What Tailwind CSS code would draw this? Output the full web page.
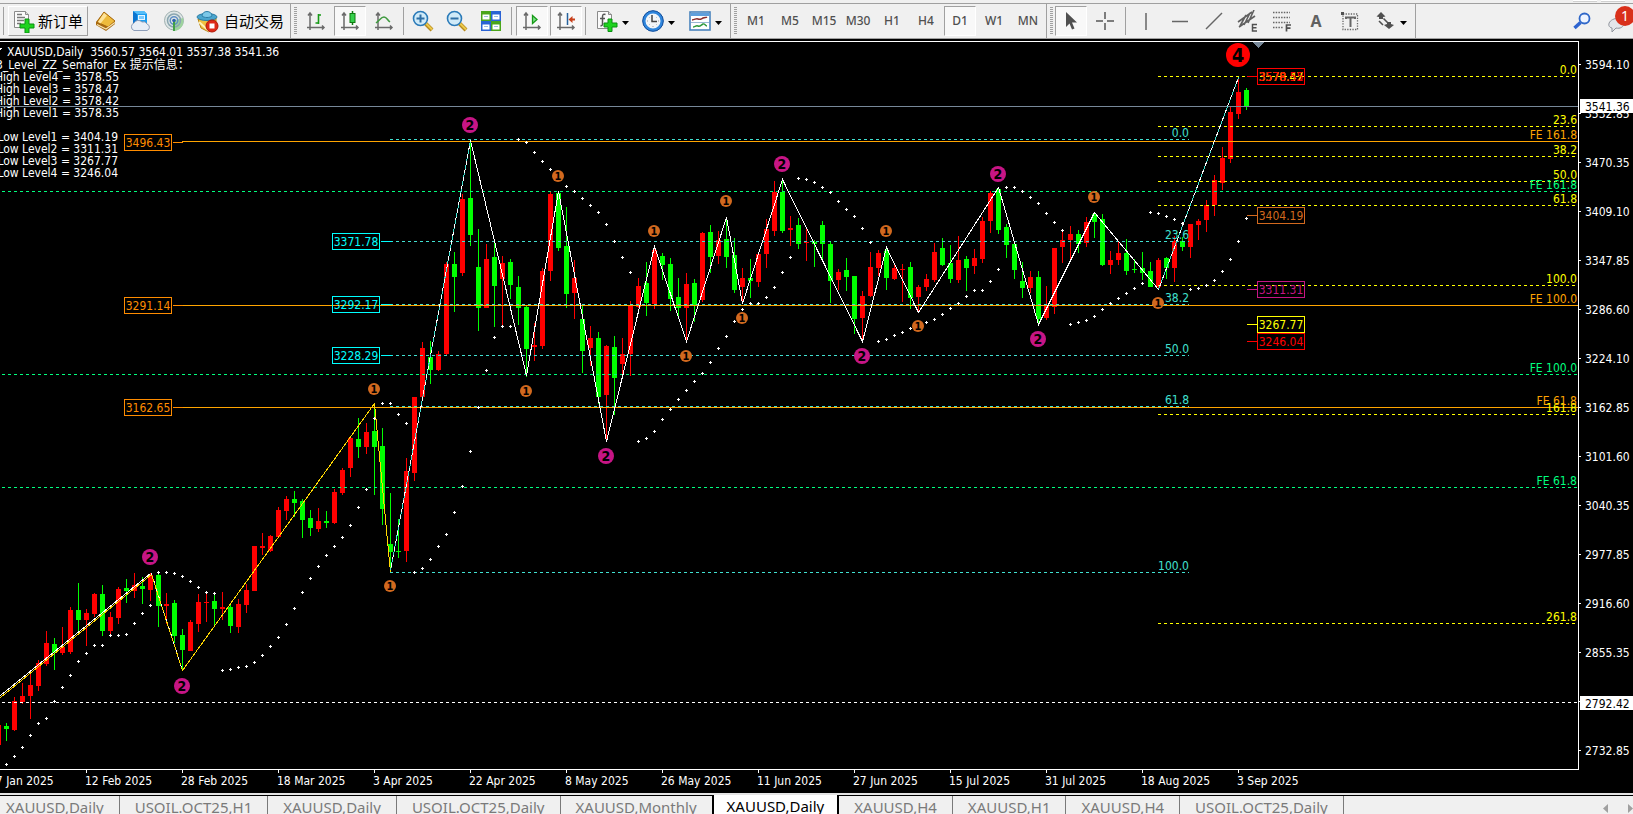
<!DOCTYPE html>
<html lang="zh-CN">
<head>
    <meta charset="UTF-8">
    <meta name="viewport" content="width=device-width, initial-scale=1.0">
    <title>XAUUSD,Daily</title>
    <script src="https://cdn.jsdelivr.net/npm/@tailwindcss/browser@4"></script>
</head>
<body class="h-screen flex flex-col overflow-hidden bg-black text-black font-['Noto_Sans','Noto_Sans_CJK_SC',sans-serif]">

    <!-- toolbar -->
    <header class="relative bg-[#f0f0f0] pt-[3px] border-b border-[#a0a0a0] flex-shrink-0">
        <div class="absolute right-2 top-0 flex gap-1"><span class="w-6 h-0.5 bg-white border-b border-[#d0d0d0]"></span><span class="w-6 h-0.5 bg-white border-b border-[#d0d0d0]"></span></div>
        <div class="flex items-center h-[35px] border-t border-[#a0a0a0]">
            <!-- standard -->
            <div class="flex items-center gap-0.5 h-full border-r border-[#a0a0a0] pr-0.5">
                <span class="w-px h-7 bg-[#a0a0a0] ml-[3px] mr-0.5"></span>
                <button class="w-20 h-[30px] flex items-center gap-[3px] pl-1 text-[15px] border border-t-white border-l-white border-r-[#a0a0a0] border-b-[#a0a0a0]">
                    <svg width="22" height="24" viewBox="0 0 22 24"><path d="M1.500 2.500h11l3 3v13h-14z" fill="#fafafa" stroke="#8a8a8a"/><path d="M12.500 2.500v3h3" fill="#ddd" stroke="#8a8a8a"/><path d="M4 5.500h5M4 8.500h8M4 11.500h7M4 14.500h4" stroke="#777" stroke-width="1.300"/><path d="M12 10h4v5h5v4h-5v5h-4v-5H7v-4h5z" fill="#1ed31e" stroke="#0a8f12"/></svg>
                    新订单
                </button>
                <button class="w-8 h-[30px] grid place-items-center" title="市场报价"><svg width="22" height="22" viewBox="0 0 22 22"><path d="M9 2L20 11v3l-9 7-10-6v-3z" fill="#a8690f"/><path d="M9 2l11 9-7 6L2 12z" fill="#eebb3c" stroke="#a8690f"/><path d="M9 3l3 2.500-6.500 8L3 12z" fill="#fde39a"/><path d="M2 14.500l9 4.500 9-6.500" stroke="#f6e3b0" stroke-width="1.200" fill="none"/></svg></button>
                <button class="w-8 h-[30px] grid place-items-center" title="虚拟主机"><svg width="22" height="22" viewBox="0 0 22 22"><path d="M4 1h11l3 3v9H4z" fill="#1b9df0"/><path d="M4 1l4 3v9H4z" fill="#0b74cf"/><path d="M4 1h11l3 3H8z" fill="#55bdf8"/><rect x="9.500" y="5.500" width="6" height="4" fill="#7ccbff" stroke="#e6f6ff"/><path d="M5 20.500a4 4 0 0 1 0-7.500 5 5 0 0 1 8-1 4 4 0 0 1 5 2 3.400 3.400 0 0 1 0 6.500z" fill="#e9eef6" stroke="#8d9db8"/></svg></button>
                <button class="w-8 h-[30px] grid place-items-center" title="信号"><svg width="22" height="22" viewBox="0 0 22 22" fill="none"><circle cx="11" cy="10.500" r="9.500" fill="#dfe6e6" stroke="#9fb0b0"/><path d="M11 10.500v10.500a10 10 0 0 0 9-13z" fill="#9ed39e"/><circle cx="11" cy="10.500" r="6.500" stroke="#8aa6b0" stroke-width="1.500"/><circle cx="11" cy="10.500" r="3.800" stroke="#5f8fc4" stroke-width="1.500"/><circle cx="11" cy="10.500" r="1.800" fill="#2f62ad"/><path d="M11 12v9" stroke="#43a047" stroke-width="2"/></svg></button>
                <button class="w-24 h-[30px] flex items-center gap-[5px] pl-1 text-[15px]">
                    <svg width="23" height="23" viewBox="0 0 23 23" class="flex-shrink-0"><path d="M2 9l3 9 8 4 7-9V8z" fill="#f0c040" stroke="#b98514"/><path d="M3 12l10 9" stroke="#fff2b8" stroke-width="2"/><ellipse cx="11" cy="7" rx="10" ry="3.500" fill="#4aa6cf" stroke="#2d7ea6"/><path d="M6 6c0-6 10-6 10 0-2 2-8 2-10 0z" fill="#7cc8e8" stroke="#2d7ea6"/><circle cx="16" cy="16" r="6" fill="#df2a17" stroke="#b01808"/><rect x="13.500" y="13.500" width="5" height="5" fill="#fff"/></svg>
                    自动交易
                </button>
            </div>
            <!-- charts -->
            <span class="w-[3px] h-7 ml-[3px] mr-[3px] bg-[repeating-linear-gradient(to_bottom,#a0a0a0_0_1px,#f0f0f0_1px_2px)]"></span>
            <div class="flex items-center gap-0.5 h-full border-r border-[#a0a0a0] pr-0.5 text-[#5a5a5a]">
                <button class="w-8 h-[30px] grid place-items-center" title="柱状图"><svg width="20" height="20" viewBox="0 0 20 20" fill="none"><path d="M4 2v17M1 16.500h17M2 4.500L4 2l2 2.500M16 14.500l2 2-2 2" stroke="#6a6a6a" stroke-width="1.500"/><path d="M12.500 3v10M9.500 12h3M12.500 4h2.500" stroke="#179a17" stroke-width="1.600"/></svg></button>
                <button class="w-8 h-[30px] grid place-items-center bg-[#f8f8f8] border border-t-[#a0a0a0] border-l-[#a0a0a0] border-r-white border-b-white" title="阴阳烛"><svg width="20" height="20" viewBox="0 0 20 20" fill="none"><path d="M4 2v17M1 16.500h17M2 4.500L4 2l2 2.500M16 14.500l2 2-2 2" stroke="#6a6a6a" stroke-width="1.500"/><path d="M12.500 0v14" stroke="#107a10" stroke-width="1.500"/><rect x="10" y="2.500" width="5" height="9" fill="#35d04c" stroke="#107a10"/></svg></button>
                <button class="w-8 h-[30px] grid place-items-center" title="折线图"><svg width="20" height="20" viewBox="0 0 20 20" fill="none"><path d="M4 2v17M1 16.500h17M2 4.500L4 2l2 2.500M16 14.500l2 2-2 2" stroke="#6a6a6a" stroke-width="1.500"/><path d="M2 12c4-3 5-6 8-6 3 0 3 3 6 5" stroke="#3f9a3f" stroke-width="1.500"/></svg></button>
                <span class="w-px h-7 bg-[#a0a0a0] mx-px"></span>
                <button class="w-8 h-[30px] grid place-items-center" title="放大"><svg width="22" height="22" viewBox="0 0 22 22" fill="none"><path d="M13 13l7 7" stroke="#b78a1c" stroke-width="4"/><path d="M13 12.500l7 7" stroke="#ecc94b" stroke-width="2"/><circle cx="8.500" cy="8.500" r="7" fill="#cfeaf8" stroke="#2a7ab8" stroke-width="1.600"/><path d="M4.500 8.500h8M8.500 4.500v8" stroke="#2e6fa5" stroke-width="2"/></svg></button>
                <button class="w-8 h-[30px] grid place-items-center" title="缩小"><svg width="22" height="22" viewBox="0 0 22 22" fill="none"><path d="M13 13l7 7" stroke="#b78a1c" stroke-width="4"/><path d="M13 12.500l7 7" stroke="#ecc94b" stroke-width="2"/><circle cx="8.500" cy="8.500" r="7" fill="#cfeaf8" stroke="#2a7ab8" stroke-width="1.600"/><path d="M4.500 8.500h8" stroke="#2e6fa5" stroke-width="2"/></svg></button>
                <button class="w-8 h-[30px] grid place-items-center" title="平铺"><svg width="20" height="20" viewBox="0 0 20 20"><path fill="#4aa51a" d="M0 0h10v10H0zM10 10h10v10H10z"/><path fill="#2a62d4" d="M10 0h10v10H10zM0 10h10v10H0z"/><path fill="#fff" d="M1.500 3.500h7v5h-7zM11.500 3.500h7v5h-7zM1.500 13.500h7v5h-7zM11.500 13.500h7v5h-7z"/><path d="M3 5.500h4M13 5.500h4M3 15.500h4M13 15.500h4" stroke="#9fbbe0"/></svg></button>
                <span class="w-px h-7 bg-[#a0a0a0] mx-0.5"></span>
                <button class="w-8 h-[30px] grid place-items-center bg-[#f8f8f8] border border-t-[#a0a0a0] border-l-[#a0a0a0] border-r-white border-b-white" title="自动滚动"><svg width="20" height="20" viewBox="0 0 20 20" fill="none"><path d="M4 2v17M1 16.500h17M2 4.500L4 2l2 2.500M16 14.500l2 2-2 2" stroke="#6a6a6a" stroke-width="1.500"/><path d="M10.500 4.500L15 8.500l-4.500 4z" fill="#7de08a" stroke="#179a17" stroke-width="1.300"/></svg></button>
                <button class="w-8 h-[30px] grid place-items-center bg-[#f8f8f8] border border-t-[#a0a0a0] border-l-[#a0a0a0] border-r-white border-b-white" title="图表平移"><svg width="20" height="20" viewBox="0 0 20 20" fill="none"><path d="M4 2v17M1 16.500h17M2 4.500L4 2l2 2.500M16 14.500l2 2-2 2" stroke="#6a6a6a" stroke-width="1.500"/><path d="M11.500 2v12" stroke="#27639c" stroke-width="1.500"/><path d="M12.500 8.500l4-3.500v2.500H19v2h-2.500V12z" fill="#c8401c"/></svg></button>
                <span class="w-px h-7 bg-[#a0a0a0] mx-px"></span>
                <button class="w-[45px] h-[30px] flex items-center gap-1 pl-[7px]" title="指标"><svg width="22" height="22" viewBox="0 0 22 22"><path d="M1.500 1.500h11l3 3v14h-14z" fill="#fafafa" stroke="#8a8a8a"/><path d="M12.500 1.500v3h3" fill="#ddd" stroke="#8a8a8a"/><path d="M9.500 4.500C7 3.500 6.500 5 6.500 7v7c0 1.500-1 2-2 1.500M4 8.500h5" stroke="#555" stroke-width="1.500" fill="none"/><path d="M12 9h4v4h5v4h-5v4.500h-4V17H8v-4h4z" fill="#1ed31e" stroke="#0a8f12"/></svg><svg width="7" height="4" class="mt-1"><path d="M0 0h7L3.500 4z"/></svg></button>
                <button class="w-[45px] h-[30px] flex items-center gap-1 pl-[6px]" title="时段"><svg width="22" height="22" viewBox="0 0 22 22"><circle cx="11" cy="11" r="9" fill="#f2f5f8" stroke="#2f86dd" stroke-width="3"/><circle cx="11" cy="11" r="10.300" fill="none" stroke="#164f9b"/><path d="M10 5v6.500h5" stroke="#444" stroke-width="1.500" fill="none"/><path d="M5 11h1M16 11h1M11 16v1M7 7l.5.5M15 7l-.5.5M7 15l.5-.5M15 15l-.5-.5" stroke="#999"/></svg><svg width="7" height="4" class="mt-1"><path d="M0 0h7L3.500 4z"/></svg></button>
                <button class="w-[45px] h-[30px] flex items-center gap-1 pl-[6px]" title="模板"><svg width="22" height="20" viewBox="0 0 22 20"><rect x="1" y="1" width="20" height="18" fill="#fff" stroke="#4a84bd" stroke-width="1.600"/><path fill="#5f9fdc" d="M2 2h18v3H2z"/><path d="M2 11.500h18" stroke="#9bb8d3"/><path d="M3 9c3 0 4-2 6-1s3 0 5-1 3 0 4-1" stroke="#8a2d2d" stroke-width="1.400" fill="none"/><path d="M4 16c2 0 3-2 5-1s3-1 5-2 2 2 4 2" stroke="#2f9a3d" stroke-width="1.400" fill="none"/></svg><svg width="7" height="4" class="mt-1"><path d="M0 0h7L3.500 4z"/></svg></button>
            </div>
            <!-- periods -->
            <span class="w-[3px] h-7 ml-[3px] mr-[3px] bg-[repeating-linear-gradient(to_bottom,#a0a0a0_0_1px,#f0f0f0_1px_2px)]"></span>
            <div class="flex items-center gap-0.5 h-full border-r border-[#a0a0a0] pr-0.5 text-xs font-medium text-[#505050]">
                <button class="w-8 h-[30px]">M1</button>
                <button class="w-8 h-[30px]">M5</button>
                <button class="w-8 h-[30px]">M15</button>
                <button class="w-8 h-[30px]">M30</button>
                <button class="w-8 h-[30px]">H1</button>
                <button class="w-8 h-[30px]">H4</button>
                <button class="w-8 h-[30px] bg-[#f8f8f8] border border-t-[#a0a0a0] border-l-[#a0a0a0] border-r-white border-b-white">D1</button>
                <button class="w-8 h-[30px]">W1</button>
                <button class="w-8 h-[30px]">MN</button>
            </div>
            <!-- line studies -->
            <span class="w-[3px] h-7 ml-[3px] mr-0.5 bg-[repeating-linear-gradient(to_bottom,#a0a0a0_0_1px,#f0f0f0_1px_2px)]"></span>
            <div class="flex items-center gap-0.5 h-full border-r border-[#a0a0a0] pr-0.5">
                <button class="w-8 h-[30px] grid place-items-center bg-[#f8f8f8] border border-t-[#a0a0a0] border-l-[#a0a0a0] border-r-white border-b-white" title="光标"><svg width="20" height="20" viewBox="0 0 20 20"><path d="M5 1v15l3.500-3.500L11 18.500l2.500-1-2.500-6h5z" fill="#505050"/></svg></button>
                <button class="w-8 h-[30px] grid place-items-center" title="十字准线"><svg width="20" height="20" viewBox="0 0 20 20"><path d="M10 1v7M10 12v7M1 10h7M12 10h7" stroke="#555" stroke-width="1.500"/></svg></button>
                <span class="w-px h-7 bg-[#a0a0a0] mx-0.5"></span>
                <button class="w-8 h-[30px] grid place-items-center" title="垂直线"><svg width="20" height="20" viewBox="0 0 20 20"><path d="M10 2v17" stroke="#666" stroke-width="1.500"/></svg></button>
                <button class="w-8 h-[30px] grid place-items-center" title="水平线"><svg width="20" height="20" viewBox="0 0 20 20"><path d="M2 10.500h16" stroke="#666" stroke-width="1.500"/></svg></button>
                <button class="w-8 h-[30px] grid place-items-center" title="趋势线"><svg width="20" height="20" viewBox="0 0 20 20"><path d="M2 18L18 2" stroke="#666" stroke-width="1.500"/></svg></button>
                <button class="w-8 h-[30px] grid place-items-center" title="通道"><svg width="22" height="22" viewBox="0 0 22 22"><path d="M1 12L15 2M2 17L18 6M3 16l6-11M7 15l6-12M11 13l6-13" stroke="#606060" stroke-width="1.600"/><path d="M20 14.500h-4.500v6.500H20M15.500 17.700h4" stroke="#505050" stroke-width="1.500" fill="none"/></svg></button>
                <button class="w-8 h-[30px] grid place-items-center" title="斐波那契"><svg width="20" height="21" viewBox="0 0 20 21"><path d="M1 1.500h17M1 6.500h17M1 11.500h17M1 16.500h10" stroke="#666" stroke-width="1.500" stroke-dasharray="1.500 1.200"/><path d="M14.500 20.500V14H19M14.500 17.200h4" stroke="#505050" stroke-width="1.700" fill="none"/></svg></button>
                <button class="w-8 h-[30px] text-base font-bold text-[#606060]" title="文本">A</button>
                <button class="w-8 h-[30px] grid place-items-center" title="文本标签"><svg width="18" height="19" viewBox="0 0 18 19"><rect x="2" y="2" width="14.500" height="15.500" fill="none" stroke="#666" stroke-width="1.300" stroke-dasharray="1.300 1.300"/><path d="M0 0h3v3H0z" fill="#505050"/><path d="M5 7V5.500h9V7M9.500 5.500V15" stroke="#666" stroke-width="2" fill="none"/></svg></button>
                <button class="w-[45px] h-[30px] flex items-center gap-1.5 pl-2" title="箭头"><svg width="18" height="18" viewBox="0 0 18 18"><path d="M5 0l4.500 4.500L7 5v2H3V5L.5 4.500zM13 17l-5-4 3-1v-2h4v2l3 1z" fill="#505050"/><path d="M3 9l4 4M7.500 6.500l4 4" stroke="#505050" stroke-width="1.600"/></svg><svg width="7" height="4" class="mt-1"><path d="M0 0h7L3.500 4z"/></svg></button>
            </div>
            <div class="ml-auto flex items-center">
                <button class="w-8 h-[30px] grid place-items-center" title="搜索"><svg width="18" height="18" viewBox="0 0 18 18" fill="none"><path d="M7.500 10.500L1.500 16" stroke="#2d63cf" stroke-width="3.500"/><circle cx="11.500" cy="6.500" r="5" fill="#eef4ff" stroke="#2f67c9" stroke-width="1.800"/></svg></button>
                <button class="relative w-[35px] h-[30px] pl-2 pt-2" title="消息">
                    <svg width="22" height="18" viewBox="0 0 22 18"><path d="M8 3c4-2 10 0 10 4s-4 6-8 5l-4 4v-4C1 11 2 5 8 3z" fill="#e4e6ea" stroke="#8f949c"/></svg>
                    <span class="absolute -right-0.5 top-0 w-5 h-5 rounded-full bg-[#d9301a] text-white text-sm leading-5 text-center">1</span>
                </button>
            </div>
        </div>
    </header>

    <!-- chart window -->
    <main class="flex-1 min-h-0 flex flex-col pt-0.5 text-xs font-['DejaVu_Sans_Condensed','Noto_Sans','Noto_Sans_CJK_SC',sans-serif]">
        <div class="flex-1 min-h-0 flex">
            <svg id="plot" class="flex-1 min-w-0 h-full border-t border-white"></svg>
            <svg id="price-scale" class="w-[55px] h-full border-l border-white flex-shrink-0"></svg>
        </div>
        <div class="h-6 flex-shrink-0 flex">
            <svg id="time-scale" class="flex-1 min-w-0 h-6"></svg>
            <span class="w-[54px]"></span>
        </div>
    </main>

    <!-- chart tabs -->
    <nav class="h-[21px] flex-shrink-0 overflow-hidden bg-[#f0f0f0] border-t-2 border-[#e4e4e4] flex text-[15px] leading-[22px] text-[#7a7a7a]">
        <div class="flex border-t border-black">
            <a href="#" class="pl-1.5 pr-[15px]">XAUUSD,Daily</a>
            <a href="#" class="px-[15px] border-l border-[#7a7a7a]">USOIL.OCT25,H1</a>
            <a href="#" class="px-[15px] border-l border-[#7a7a7a]">XAUUSD,Daily</a>
            <a href="#" class="px-[15px] border-l border-[#7a7a7a]">USOIL.OCT25,Daily</a>
            <a href="#" class="px-[15px] border-l border-[#7a7a7a]">XAUUSD,Monthly</a>
        </div>
        <a href="#" class="px-[13px] bg-white text-black border-x-2 border-black">XAUUSD,Daily</a>
        <div class="flex flex-1 border-t border-black">
            <a href="#" class="px-[15px]">XAUUSD,H4</a>
            <a href="#" class="px-[15px] border-l border-[#7a7a7a]">XAUUSD,H1</a>
            <a href="#" class="px-[15px] border-l border-[#7a7a7a]">XAUUSD,H4</a>
            <a href="#" class="px-[15px] border-x border-[#7a7a7a]">USOIL.OCT25,Daily</a>
            <div class="ml-auto flex gap-5 pt-1.5">
                <button title="左"><svg width="5" height="9"><path d="M5 0v9L0 4.500z" fill="#a0a0a0"/></svg></button>
                <button title="右"><svg width="5" height="9"><path d="M0 0v9l5-4.500z" fill="#a0a0a0"/></svg></button>
            </div>
        </div>
    </nav>

    <script>
        // one row per bar: colour, high, body top, body bottom, low
        const bars = `r725,725,745,745 g723,726,729,741 r697,701,730,731 r683,696,702,704 r673,685,696,719 r660,663,686,691 r631,643,664,666
g638,644,653,670 r627,647,653,655 r607,610,652,654 g583,610,620,631 r609,613,620,646 r593,594,614,617 g585,594,631,636 r612,617,631,634
r587,589,618,624 g579,588,591,603 r573,585,591,598 g577,586,589,604 r573,575,590,601 g574,575,606,627 r593,604,606,624 g600,603,636,643
g629,635,650,669 r620,622,651,651 r594,602,624,632 r594,602,603,622 g595,601,609,625 r592,607,609,620 g603,607,626,633 r599,604,627,633
r584,590,605,613 r546,546,591,591 r533,546,548,555 r535,536,551,552 r507,510,537,538 r496,499,511,520 g491,499,503,517 g499,501,520,538
g510,518,528,536 r508,521,529,532 g511,521,523,528 r489,492,523,524 r468,470,493,495 r436,438,468,477 g418,439,447,458 r423,432,447,454
g405,431,447,495 g428,446,509,525 g493,544,552,572 g519,551,552,558 r458,471,551,562 r397,397,473,481 r342,348,397,397
g341,357,370,384 r351,354,370,371 r262,264,354,355 g252,264,277,312 r194,199,273,276 g140,198,235,246 g229,267,308,331 r244,259,308,308
g243,257,286,327 r256,263,279,325 g259,262,285,299 g276,287,308,325 g305,307,349,377 r323,345,347,361 r268,271,346,349 r192,194,271,281
g191,193,248,251 g207,246,294,308 r260,278,293,319 g305,319,351,373 r326,338,348,366 g332,338,397,404 r345,346,395,442 g336,347,378,415
r338,354,364,376 r301,305,354,376 r278,286,307,308 g262,283,303,316 r248,250,304,309 g253,256,265,280 g258,264,299,311 g278,297,308,317
r273,284,308,341 g279,283,305,322 r232,233,300,302 g225,232,257,273 r231,240,256,264 g217,239,257,268 g238,255,290,293 r268,278,287,303
g259,278,281,298 r253,254,282,287 r219,229,254,268 r181,192,231,236 g181,192,231,233 r216,228,230,246 g218,225,244,249 r227,242,243,261
g240,242,244,267 g221,225,244,262 g242,244,281,303 r269,272,280,290 g258,270,277,291 g276,276,319,334 r291,296,318,342 r252,267,296,297
r250,253,268,276 g247,251,278,290 r265,268,279,280 r264,269,270,302 g262,267,298,309 r285,287,297,312 r274,279,287,291 r243,252,280,282
g238,248,265,266 g245,263,279,283 r236,260,280,283 g256,259,268,291 r249,258,266,274 r217,221,259,263 r191,193,221,233 g188,189,230,234
g224,227,245,258 g241,244,270,279 g262,281,288,298 r271,277,288,293 g271,277,319,323 r286,306,318,320 r248,248,307,314 r231,240,247,263
r226,234,240,259 g230,234,244,253 r217,222,243,247 g212,214,222,238 g214,219,265,266 r251,260,265,274 r242,253,260,265 g239,253,271,275
g259,269,270,273 g252,268,273,280 g262,271,287,287 r258,260,287,289 g257,258,268,279 r236,241,268,282 g237,241,247,251 r224,224,247,258
r219,221,225,240 r200,205,220,232 r175,180,205,216 r147,158,183,190 r107,112,159,163 r78,92,114,119 g88,90,107,110`.split(/\s+/);

        // parabolic SAR: first x, then one level per bar
        const sar = [
            [6, 764,756,747,735,723,718,701,687,675,661,653,645,645,635,635,634,623,613,605],
            [158, 572,572,573,576,581,587,592,593],
            [222, 670,669,667,666,662,655,646,637,624,608,592,578,566,555,546,537,525,507,489,418],
            [382, 403,403,414,423],
            [414, 572,568,559,546,534,512,486,451,407,370,337,326,326],
            [518, 139,142,152,161,169,178,186,191,198,205,212,224,241,257,272],
            [638, 441,438,431,419,409,399,390,381,373,362,348,336,321,309,303,303,297,287,272,257],
            [798, 178,179,182,187,192,201,209,216,228,242],
            [878, 341,339,335,332,328,325,322,319,314,308,303,296,290,290,281,269],
            [1006, 187,187,191,197,203,213,222,230],
            [1070, 324,322,320,316,309,303,298,293,288,283],
            [1150, 212,213,216,219,223],
            [1190, 289,288,285,280,271,259,241,218]
        ];

        const out = [];
        const rect = (x, y, w, h, fill) => out.push(`<rect x="${x}" y="${y}" width="${w}" height="${h}" fill="${fill}"/>`);
        const hline = (x1, x2, y, color, dash) =>
            out.push(`<line x1="${x1}" x2="${x2}" y1="${y + 0.5}" y2="${y + 0.5}" stroke="${color}"${dash ? ' stroke-dasharray="3 3"' : ''}/>`);
        const text = (x, y, s, color, anchor) =>
            out.push(`<text x="${x}" y="${y}" fill="${color}" text-anchor="${anchor || 'start'}" xml:space="preserve">${s}</text>`);
        const path = (pts, color, dash) =>
            out.push(`<polyline points="${pts}" transform="translate(.5 .5)" fill="none" stroke="${color}"${dash ? ` stroke-dasharray="${dash}"` : ''}/>`);

        bars.forEach((b, i) => {
            const x = -2 + i * 8;
            const color = b[0] === 'r' ? '#ff0000' : '#00ff00';
            const [hi, top, bot, lo] = b.slice(1).split(',').map(Number);
            rect(x, hi, 1, lo - hi, color);
            rect(x - 2, top, 5, Math.max(bot - top, 1), color);
        });

        // horizontal levels
        hline(0, '100%', 106, '#778899');
        [191, 374, 487].forEach(y => hline(2, '100%', y, '#00ff7f', true));
        [139, 241, 304, 355, 406, 572].forEach(y => hline(390, 1189, y, '#40e0d0', true));
        [76, 126, 156, 181, 205, 285, 414, 623].forEach(y => hline(1158, '100%', y, '#ffff00', true));
        hline(182, '100%', 141, '#ffa500');
        hline(182, '100%', 305, '#ffa500');
        hline(182, '100%', 407, '#ffa500');
        hline(2, '100%', 702, '#ffffff', true);

        // zigzag
        path('0,697 151,574 182,670 374,403 390,572', '#ffd700');
        path('0,695 150,573', '#ffffff');
        path('151,573 182,670', '#ffffff', '2 6');
        path('390,570 470,140 526,375 558,191 606,441 654,246 686,341 726,217 742,303 782,179 862,341 886,247 918,312 998,187 1038,324 1094,212 1158,289 1238,77', '#ffffff');
        path('390,570 470,140', '#40e0d0', '4 4');
        path('1158,289 1238,77', '#40e0d0', '4 4');

        sar.forEach(([x0, ...ys]) => ys.forEach((y, i) => {
            rect(x0 + i * 8 - 1, y, 3, 1, '#fff');
            rect(x0 + i * 8, y - 1, 1, 3, '#fff');
        }));

        // level captions
        [['0.0', 137], ['23.6', 239], ['38.2', 302], ['50.0', 353], ['61.8', 404], ['100.0', 570]].forEach(([s, y]) => text(1189, y, s, '#40e0d0', 'end'));
        out.push('<svg x="100%" overflow="visible">');
        [['0.0', 74], ['23.6', 124], ['38.2', 154], ['50.0', 179], ['61.8', 203], ['100.0', 283], ['161.8', 412], ['261.8', 621]].forEach(([s, y]) => text(-1, y, s, '#ffff00', 'end'));
        [['FE 161.8', 139], ['FE 100.0', 303], ['FE 61.8', 405]].forEach(([s, y]) => text(-1, y, s, '#ffa500', 'end'));
        [['FE 161.8', 189], ['FE 100.0', 372], ['FE 61.8', 485]].forEach(([s, y]) => text(-1, y, s, '#00ff7f', 'end'));
        out.push('</svg>');

        // price tags: box x, box y, label, colour, tick x, tick width
        [
            [124, 134, '3496.43', '#ff8c00', 173, 10],
            [124, 297, '3291.14', '#ff8c00', 173, 10],
            [124, 399, '3162.65', '#ff8c00', 173, 10],
            [332, 233, '3371.78', '#00ffff', 381, 11],
            [332, 296, '3292.17', '#00ffff', 381, 11],
            [332, 347, '3228.29', '#00ffff', 381, 11],
            [1257, 68, '3578.42', '#ff0000', 1247, 10],
            [1257, 68, '3578.47', '#ffff00', 1247, 10],
            [1257, 68, '3578.55', '#ff0000', 1247, 10],
            [1257, 207, '3404.19', '#d2691e', 1247, 10],
            [1257, 281, '3311.31', '#c71585', 1247, 10],
            [1257, 316, '3267.77', '#ffff00', 1247, 10],
            [1257, 333, '3246.04', '#ff0000', 1247, 10]
        ].forEach(([x, y, s, c, tx, tw]) => {
            out.push(`<rect x="${x + 0.5}" y="${y + 0.5}" width="47" height="16" fill="none" stroke="${c}"/>`);
            rect(tx, y + 8, tw, 1, c);
            text(x + 24, y + 13, s, c, 'middle');
        });

        // semafor marks: x, y, radius, digit
        const marks = [
            [150, 557, 8, 2], [182, 686, 8, 2], [470, 125, 8, 2], [606, 456, 8, 2], [782, 164, 8, 2], [862, 356, 8, 2], [998, 174, 8, 2], [1038, 339, 8, 2],
            [374, 389, 6, 1], [390, 586, 6, 1], [526, 391, 6, 1], [558, 176, 6, 1], [654, 231, 6, 1], [686, 356, 6, 1], [726, 201, 6, 1], [742, 318, 6, 1],
            [886, 231, 6, 1], [918, 326, 6, 1], [1094, 197, 6, 1], [1158, 303, 6, 1], [1238, 55, 12, 4]
        ];
        const markColor = { 1: '#d2691e', 2: '#c71585', 4: '#ff0000' };
        marks.forEach(([x, y, r, n]) => {
            out.push(`<circle cx="${x}" cy="${y}" r="${r}" fill="${markColor[n]}" shape-rendering="auto"/>`);
            const size = { 1: 11, 2: 14, 4: 20 }[n];
            out.push(`<text x="${x}" y="${y + Math.round(size * 0.36)}" font-size="${size}" font-weight="700" text-anchor="middle">${n}</text>`);
        });

        out.push('<path d="M1252 42h12l-6 6z" fill="#778899"/><path d="M-4 48h6l-3 4z" fill="#fff"/>');

        // comment block
        text(7, 56, 'XAUUSD,Daily  3560.57 3564.01 3537.38 3541.36', '#fff');
        text(-4, 69, '3_Level_ZZ_Semafor_Ex 提示信息：', '#fff');
        ['High Level4 = 3578.55', 'High Level3 = 3578.47', 'High Level2 = 3578.42', 'High Level1 = 3578.35'].forEach((s, i) => text(119, 81 + i * 12, s, '#fff', 'end'));
        ['Low Level1 = 3404.19', 'Low Level2 = 3311.31', 'Low Level3 = 3267.77', 'Low Level4 = 3246.04'].forEach((s, i) => text(118, 141 + i * 12, s, '#fff', 'end'));

        document.getElementById('plot').innerHTML = `<g transform="translate(0 -42)" shape-rendering="crispEdges">${out.join('')}</g>`;

        // price scale
        out.length = 0;
        ['3594.10', '3532.85', '3470.35', '3409.10', '3347.85', '3286.60', '3224.10', '3162.85', '3101.60', '3040.35', '2977.85', '2916.60', '2855.35', '', '2732.85'].forEach((s, i) => {
            const y = 64 + i * 49;
            rect(0, y, 2, 1, '#fff');
            text(6, y + 5, s, '#fff');
        });
        [['3541.36', 106], ['2792.42', 703]].forEach(([s, y]) => {
            rect(1, y - 7, 54, 14, '#fff');
            text(6, y + 5, s, '#000');
        });
        document.getElementById('price-scale').innerHTML = `<g transform="translate(0 -41)" shape-rendering="crispEdges">${out.join('')}</g>`;

        // time scale
        out.length = 0;
        rect(0, 0, '100%', 1, '#fff');
        ['27 Jan', '12 Feb', '28 Feb', '18 Mar', '3 Apr', '22 Apr', '8 May', '26 May', '11 Jun', '27 Jun', '15 Jul', '31 Jul', '18 Aug', '3 Sep'].forEach((s, i) => {
            const x = -10 + i * 96;
            rect(x, 1, 1, 3, '#fff');
            text(x - 1, 16, s + ' 2025', '#fff');
        });
        document.getElementById('time-scale').innerHTML = `<g shape-rendering="crispEdges">${out.join('')}</g>`;
    </script>

</body>
</html>
